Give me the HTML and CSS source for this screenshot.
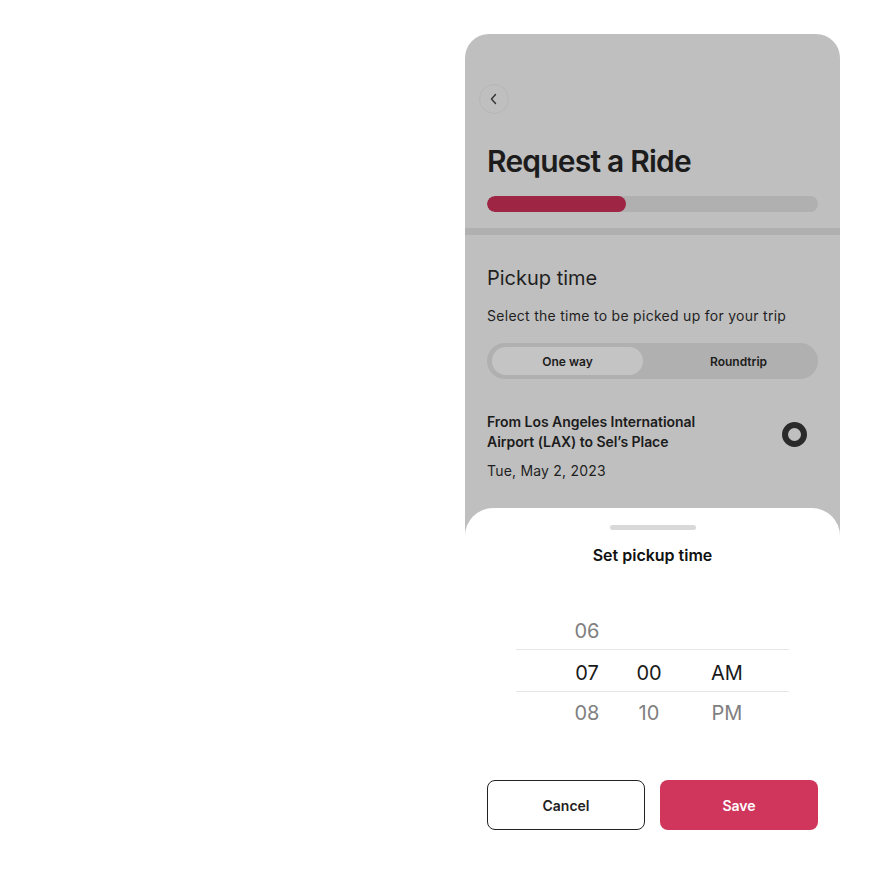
FILE: index.html
```html
<!DOCTYPE html>
<html lang="en">
<head>
<meta charset="utf-8">
<title>Request a Ride</title>
<link rel="stylesheet" href="styles.css">
</head>
<body>
<div class="stage">
  <div class="phone">
    <div class="screen">
      <button class="back" aria-label="Back">
        <svg width="10" height="12" viewBox="0 0 10 12"><path d="M6.5 1.5 L2.5 6 L6.5 10.5" fill="none" stroke="#333" stroke-width="1.4" stroke-linecap="round" stroke-linejoin="round"/></svg>
      </button>
      <h1 class="title">Request a Ride</h1>
      <div class="progress"><div class="progress-fill" style="width:42%"></div></div>
    </div>
    <div class="divider"></div>
    <div class="screen section">
      <h2 class="subtitle">Pickup time</h2>
      <p class="hint">Select the time to be picked up for your trip</p>
      <div class="segmented">
        <span class="seg seg-active">One way</span>
        <span class="seg">Roundtrip</span>
      </div>
      <div class="route">
        <div class="route-text">
          <div class="route-name">From Los Angeles International<br>Airport (LAX) to Sel’s Place</div>
          <div class="route-date">Tue, May 2, 2023</div>
        </div>
        <span class="radio"></span>
      </div>
    </div>
    <div class="sheet">
      <div class="handle"></div>
      <div class="sheet-title">Set pickup time</div>
      <div class="picker">
        <div class="prow muted"><span>06</span><span></span><span></span></div>
        <div class="prow selected"><span>07</span><span>00</span><span>AM</span></div>
        <div class="prow muted"><span>08</span><span>10</span><span>PM</span></div>
      </div>
      <div class="actions">
        <button class="btn btn-outline">Cancel</button>
        <button class="btn btn-primary">Save</button>
      </div>
    </div>
  </div>
</div>
</body>
</html>
```

FILE: styles.css
```css
* { box-sizing: border-box; }
html, body { margin: 0; padding: 0; background: #fff; }
body { font-family: "Inter", "Noto Sans", "Liberation Sans", sans-serif; color: #1c1c1c; }

.stage { padding: 34px 0 0 465px; }

.phone {
  width: 375px;
  height: 846px;
  background: #bfbfbf;
  border-radius: 24px 24px 0 0;
  overflow: hidden;
  display: flex;
  flex-direction: column;
}

.screen { padding: 50px 22px 0 22px; display: flex; flex-direction: column; }

.back {
  width: 30px; height: 30px;
  margin-left: -8px;
  border-radius: 50%;
  border: 1px solid #b6b6b6;
  background: transparent;
  display: flex; align-items: center; justify-content: center;
  padding: 0;
}

.title {
  margin: 29px 0 0 0;
  font-size: 30px;
  line-height: 36px;
  font-weight: 600;
  letter-spacing: -0.8px;
  color: #1c1c1c;
}

.progress {
  margin-top: 17px;
  height: 16px;
  border-radius: 8px;
  background: #b0b0b0;
  overflow: hidden;
}
.progress-fill { height: 100%; background: #9e2644; border-radius: 8px; }

.divider { height: 7px; background: #b0b0b0; margin-top: 16px; }

.section { padding-top: 29px; }

.subtitle {
  margin: 0;
  font-size: 20px;
  line-height: 28px;
  font-weight: 400;
  color: #1f1f1f;
}

.hint {
  margin: 14px 0 0 0;
  font-size: 14px;
  line-height: 20px;
  color: #1f1f1f;
  letter-spacing: 0.28px;
}

.segmented {
  margin-top: 17px;
  height: 36px;
  border-radius: 18px;
  background: #b0b0b0;
  padding: 4px 4px 4px 5px;
  display: grid;
  grid-template-columns: 151px 151px;
  column-gap: 20px;
}
.seg {
  display: flex; align-items: center; justify-content: center;
  font-size: 12px; font-weight: 600; color: #1c1c1c;
  border-radius: 14px;
}
.seg-active { background: #c4c4c4; }

.route {
  margin-top: 33px;
  display: flex;
  align-items: flex-start;
  justify-content: space-between;
}
.route-name { font-size: 14px; line-height: 20px; font-weight: 600; color: #1c1c1c; letter-spacing: -0.05px; }
.route-date { margin-top: 9px; font-size: 14px; line-height: 20px; color: #1f1f1f; letter-spacing: 0.2px; }

.radio {
  width: 25px; height: 25px;
  border-radius: 50%;
  border: 6.5px solid #2a2a2a;
  margin: 10px 11px 0 0;
}

.sheet {
  margin-top: 27px;
  flex: 1;
  background: #fff;
  border-radius: 28px 28px 0 0;
  display: flex;
  flex-direction: column;
  align-items: center;
  padding: 17px 22px 0 22px;
}

.handle { width: 86px; height: 5px; border-radius: 3px; background: #d9d9d9; }

.sheet-title {
  margin-top: 15px;
  font-size: 16px;
  line-height: 20px;
  font-weight: 600;
  color: #111;
}

.picker { margin-top: 43px; width: 273px; }
.prow {
  height: 41px;
  padding-top: 4px;
  display: grid;
  grid-template-columns: 62px 62px 94px;
  padding-left: 40px;
  align-items: center;
  font-size: 20px;
  justify-items: center;
}
.prow.muted { color: #808080; }
.prow.muted:last-child { height: 39px; padding-top: 2px; }
.prow.selected {
  height: 43px;
  color: #1a1a1a;
  border-top: 1.5px solid #e6e6e6;
  border-bottom: 1.5px solid #e6e6e6;
}

.actions {
  margin-top: 49px;
  width: 100%;
  display: grid;
  grid-template-columns: 1fr 1fr;
  column-gap: 15px;
}
.btn {
  height: 50px;
  border-radius: 8px;
  font-family: inherit;
  font-size: 14px;
  font-weight: 600;
  cursor: pointer;
}
.btn-outline { background: #fff; border: 1px solid #222; color: #222; }
.btn-primary { background: #d0365c; border: none; color: #fff; }
```
